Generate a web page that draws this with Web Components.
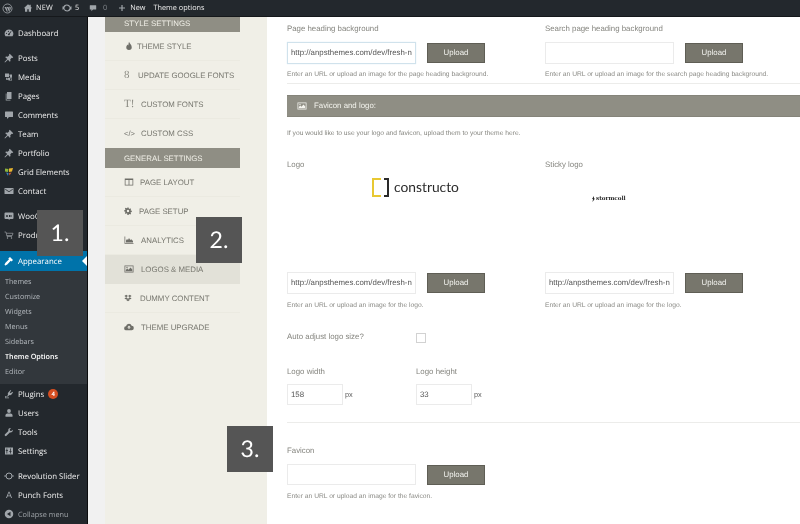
<!DOCTYPE html>
<html>
<head>
<meta charset="utf-8">
<title>Theme options</title>
<style>
  html, body { margin: 0; padding: 0; height: 524px; overflow: hidden; background: #fff; }
  body { font-family: "Liberation Sans", Arial, sans-serif; text-rendering: geometricPrecision; }
</style>
</head>
<body>
<theme-page>
  <wp-admin-bar slot="bar"></wp-admin-bar>

  <wp-menu slot="menu">
    <wp-menu-item icon="dashboard">Dashboard</wp-menu-item>
    <wp-menu-sep></wp-menu-sep>
    <wp-menu-item icon="pin">Posts</wp-menu-item>
    <wp-menu-item icon="media">Media</wp-menu-item>
    <wp-menu-item icon="pages">Pages</wp-menu-item>
    <wp-menu-item icon="comment">Comments</wp-menu-item>
    <wp-menu-item icon="pin">Team</wp-menu-item>
    <wp-menu-item icon="pin">Portfolio</wp-menu-item>
    <wp-menu-item icon="grid">Grid Elements</wp-menu-item>
    <wp-menu-item icon="mail">Contact</wp-menu-item>
    <wp-menu-sep></wp-menu-sep>
    <wp-menu-item icon="woo">WooCommerce</wp-menu-item>
    <wp-menu-item icon="cart">Products</wp-menu-item>
    <wp-menu-sep></wp-menu-sep>
    <wp-menu-item icon="brush" current>Appearance</wp-menu-item>
    <wp-submenu>
      <span>Themes</span>
      <span>Customize</span>
      <span>Widgets</span>
      <span>Menus</span>
      <span>Sidebars</span>
      <span class="on">Theme Options</span>
      <span>Editor</span>
    </wp-submenu>
    <wp-menu-item icon="plugin" badge="4">Plugins</wp-menu-item>
    <wp-menu-item icon="user">Users</wp-menu-item>
    <wp-menu-item icon="wrench">Tools</wp-menu-item>
    <wp-menu-item icon="settings">Settings</wp-menu-item>
    <wp-menu-sep></wp-menu-sep>
    <wp-menu-item icon="slider">Revolution Slider</wp-menu-item>
    <wp-menu-item glyph="A">Punch Fonts</wp-menu-item>
    <wp-menu-item icon="collapse" dim>Collapse menu</wp-menu-item>
  </wp-menu>

  <options-nav slot="nav">
    <nav-head first>Style settings</nav-head>
    <nav-item icon="drop" tx="14">Theme style</nav-item>
    <nav-item glyph="8" serif tx="15">Update Google fonts</nav-item>
    <nav-item glyph="T!" serif tx="18">Custom fonts</nav-item>
    <nav-item glyph="&lt;/&gt;" tx="18" last>Custom CSS</nav-item>
    <nav-head>General settings</nav-head>
    <nav-item icon="columns" tx="17">Page layout</nav-item>
    <nav-item icon="gear" isize="8" tx="16">Page setup</nav-item>
    <nav-item icon="chart" tx="18">Analytics</nav-item>
    <nav-item icon="image" tx="18" active>Logos &amp; media</nav-item>
    <nav-item icon="dropbox" isize="8" tx="17">Dummy content</nav-item>
    <nav-item icon="cloud" tx="18" last>Theme upgrade</nav-item>
  </options-nav>

  <options-content slot="content">
    <field-row>
      <upload-field label="Page heading background" value="http://anpsthemes.com/dev/fresh-ne" help="Enter an URL or upload an image for the page heading background." focused></upload-field>
      <upload-field label="Search page heading background" help="Enter an URL or upload an image for the search page heading background."></upload-field>
    </field-row>
    <rule-line style="--top:3px"></rule-line>
    <section-bar>Favicon and logo:</section-bar>
    <intro-text>If you would like to use your logo and favicon, upload them to your theme here.</intro-text>
    <field-row style="--row-top:19px;--help-top:5px">
      <upload-field label="Logo" value="http://anpsthemes.com/dev/fresh-ne" help="Enter an URL or upload an image for the logo.">
        <constructo-logo></constructo-logo>
      </upload-field>
      <upload-field label="Sticky logo" value="http://anpsthemes.com/dev/fresh-ne" help="Enter an URL or upload an image for the logo.">
        <stormcoll-logo></stormcoll-logo>
      </upload-field>
    </field-row>
    <check-field label="Auto adjust logo size?"></check-field>
    <size-row>
      <size-field label="Logo width" value="158"></size-field>
      <size-field label="Logo height" value="33"></size-field>
    </size-row>
    <rule-line style="--top:17px"></rule-line>
    <field-row style="--row-top:21px;--help-top:5px;--input-h:21px">
      <upload-field label="Favicon" help="Enter an URL or upload an image for the favicon."></upload-field>
    </field-row>
  </options-content>

  <step-badge slot="over" style="left:37px;top:210px">1.</step-badge>
  <step-badge slot="over" style="left:196px;top:217px">2.</step-badge>
  <step-badge slot="over" style="left:227px;top:426px">3.</step-badge>
</theme-page>

<script>
const ICONS = {
  wp: '<circle cx="10" cy="10" r="8.2" fill="none" stroke="currentColor" stroke-width="1.5"/><path d="M4.5 7.2h3.4l2.3 7.6-1 1.7zM8.6 7.2h3.4l2.2 7.6-1.1 1.7zM13 7c1.5-.4 3 .4 3 2.200 0 1.500-1 3-1.600 4.800z"/>',
  home: '<path d="M10 2.500 1.500 10.500H4v7h4.500v-5h3v5H16v-7h2.500L15.500 7.700V3.500h-2.500v1.500z"/>',
  update: '<path d="M10 3a7 7 0 0 1 6.600 4.700L19 6.500V13h-6l2.400-2.300A5.400 5.400 0 0 0 5 8.500L2.600 7.500A7.500 7.500 0 0 1 10 3zM1 7h6l-2.400 2.300A5.400 5.400 0 0 0 15 11.500l2.400 1A7.500 7.500 0 0 1 3.400 12.300L1 13.500z"/>',
  comment: '<path d="M3 3h14a1 1 0 0 1 1 1v9a1 1 0 0 1-1 1H10l-4 4v-4H3a1 1 0 0 1-1-1V4a1 1 0 0 1 1-1z"/>',
  plus: '<path d="M8.500 2.500h3v6h6v3h-6v6h-3v-6h-6v-3h6z"/>',
  dashboard: '<path fill-rule="evenodd" d="M10 3a8.500 8.500 0 0 0-7 13.500h14A8.500 8.500 0 0 0 10 3zM5 9.500a1.200 1.200 0 1 1 0 2.400 1.200 1.200 0 0 1 0-2.400zM8.800 5.500a1.200 1.200 0 1 1 0 2.400 1.200 1.200 0 0 1 0-2.400zM14 6l1 .700-3.600 5.300a1.800 1.800 0 1 1-1.600-1.100z"/>',
  pin: '<path d="M11.500 1.500 18.500 8.500 17 10l-1.500-.500-3 3 .5 3.500-1.500 1.500L8 13.500 2 19l-1-1 5.500-6L2.500 8.500 4 7l3.500.5 3-3L10 3z"/>',
  media: '<path d="M2 3h8v7H2zM4 11.500h1.500V13h2v-1.500H12V8h-1V5h5v12H9v-1.500H4z"/><path d="M13 11h2v3.500a1.500 1.500 0 1 1-1.500-1.500H13z" fill="#23282d"/>',
  pages: '<path d="M6 2h9v14H6z"/><path d="M3.500 5H5v12.500h8V19H3.500z"/>',
  grid: '<path fill="#8bb43c" d="M2 3l7 1-1 6-6-1z"/><path fill="#e8b52e" d="M10 3l8-1-2 7-6 1z"/><path fill="#3b86c4" d="M4 11l5 1-1 6z"/><path fill="#d25b3a" d="M10 12l5-1-4 6z"/>',
  mail: '<path d="M2 4h16a1 1 0 0 1 1 1v10a1 1 0 0 1-1 1H2a1 1 0 0 1-1-1V5a1 1 0 0 1 1-1z"/><path d="M2.500 6.500 10 11.500l7.500-5" fill="none" stroke="#23282d" stroke-width="1.600"/>',
  woo: '<path fill-rule="evenodd" d="M3 3h14a2 2 0 0 1 2 2v9a2 2 0 0 1-2 2h-6l1 2-4-2H3a2 2 0 0 1-2-2V5a2 2 0 0 1 2-2zM4 8v4h1l1-2 1 2h1V8H7v2L6 8.500 5 10V8zm6 0v4h2V8zm3 0v4h2V8z"/>',
  cart: '<path fill="none" stroke="currentColor" stroke-width="1.300" d="M1 4h3l2 9h10M4.600 6.500H18l-1.500 4.500H5.600"/><circle cx="7" cy="16" r="1.400"/><circle cx="15" cy="16" r="1.400"/>',
  brush: '<path d="M12 2l6 6-3 3-1.500-1.500L7 16.500c-1 1-4.500 2.500-4.500 2.500L1 17.500s1.500-3.500 2.500-4.500l6.500-6.500L8.500 5z"/>',
  plugin: '<path d="M13 2l1.500 1.500-3 3 2 2 3-3L18 7l-3 4c-1.300 1.500-3 1.700-4.500 1L8 15H3v2h7v1.500H2V14h4.500L8 11c-.700-1.500-.500-3 1-4.500z"/>',
  user: '<circle cx="10" cy="6" r="3.800"/><path d="M3 17.500v-3c0-2 2-3.500 3.500-3.500h7c1.500 0 3.500 1.500 3.500 3.500v3z"/>',
  wrench: '<path d="M17.500 5.500 14.500 8l-2.500-.5-.5-2.500 2.500-3c-2.500-.700-5.500 1-5.500 4 0 .700 0 1.300.3 1.800L2 14.500c-1 1-1 2 0 3s2 1 3 0l6.500-6.500c3.500 1 7-2 6-5.500z"/>',
  settings: '<path fill-rule="evenodd" d="M2 3h16v14H2zM5 5v3h-1.500v1.500H5V15h1.500V9.500H8V8H6.500V5zm7 0v5.500h-1.500V12H12v3h1.500v-3H15v-1.500h-1.500V5z"/>',
  slider: '<path fill="none" stroke="currentColor" stroke-width="2" d="M4 10a6 6 0 0 1 12 0 6 6 0 0 1-12 0"/><path d="M0 10l3-2.500v5zM20 10l-3-2.500v5z"/>',
  collapse: '<path fill-rule="evenodd" d="M10 1.500a8.500 8.500 0 1 0 0 17 8.500 8.500 0 0 0 0-17zM13 5.500v9L6 10z"/>',
  drop: '<path d="M10 1.500c1 3 5.500 6 5.500 11a5.500 5.500 0 0 1-11 0c0-2.500 1.500-3.500 2.500-5.500.5 1 1 1.500 1.500 2 .500-2.500.500-5 1.500-7.500z"/>',
  columns: '<path fill-rule="evenodd" d="M1.500 3h17v14h-17zM3 6v9.500h6.200V6zm7.800 0v9.500H17V6z"/>',
  gear: '<path fill-rule="evenodd" d="M8.500 1.500h3l.5 2.500 1.500.7 2.200-1.400 2.100 2.100-1.400 2.200.6 1.400 2.500.5v3l-2.500.5-.6 1.500 1.400 2.100-2.100 2.100-2.200-1.400-1.500.6-.5 2.600h-3L8 16.400l-1.500-.6-2.200 1.400-2.100-2.100 1.400-2.100-.6-1.500L.5 11V8l2.500-.5.6-1.400-1.400-2.200 2.100-2.100 2.200 1.400L8 3zM10 7a3 3 0 1 0 0 6 3 3 0 0 0 0-6z"/>',
  chart: '<path d="M1 3h1.500v13H19v1.500H1z"/><path d="M4 15v-4l2-3 2 2 2-4 2.500 4 2-1.500L18 12v3z"/>',
  image: '<path fill-rule="evenodd" d="M1 3h18v14H1zM2.500 4.500V15.500h15V4.500z"/><path d="M3.500 14.500V12l3-3 2.500 2.500 4-4.500 3.500 4v3.500z"/><circle cx="6" cy="7" r="1.300"/>',
  dropbox: '<path d="M5.500 2 10 5 5.500 8 1 5zM14.500 2 19 5 14.500 8 10 5zM1 11l4.500-3L10 11l-4.500 3zM14.500 8 19 11l-4.500 3L10 11zM5.500 15l4.500-3 4.500 3L10 18z"/>',
  cloud: '<path fill-rule="evenodd" d="M10 3.500a5.500 5.500 0 0 1 5.300 4 4.500 4.500 0 0 1-.3 9H4.500a4 4 0 0 1-.5-8A6 6 0 0 1 10 3.500zM10 7l-3.500 4H9v3h2v-3h2.500z"/>'
};
function svgIcon(name, size) {
  return `<svg width="${size}" height="${size}" viewBox="0 0 20 20" fill="currentColor">${ICONS[name] || ''}</svg>`;
}

class ThemePage extends HTMLElement {
  constructor() {
    super();
    this.attachShadow({ mode: 'open' });
    this.shadowRoot.innerHTML = `
      <style>
        :host { display: flex; flex-direction: column; position: relative; width: 800px; height: 524px; overflow: hidden; background: #fff; filter: blur(.3px); }
        .body { display: flex; flex: 1; min-height: 0; background: #f1f1f1; }
      </style>
      <slot name="bar"></slot>
      <div class="body">
        <slot name="menu"></slot>
        <slot name="nav"></slot>
        <slot name="content"></slot>
      </div>
      <slot name="over"></slot>`;
  }
}

class WpAdminBar extends HTMLElement {
  constructor() {
    super();
    this.attachShadow({ mode: 'open' });
    this.shadowRoot.innerHTML = `
      <style>
        :host { display: flex; align-items: center; height: 17px; background: #23282d; color: #eee; font: 7.3px/17px "Open Sans", sans-serif; padding-left: 2px; box-sizing: border-box; border-bottom: 1px solid #15181b; }
        svg { display: block; color: #a0a5aa; flex: none; }
        span { white-space: nowrap; }
        .dim { color: #82878c; }
        .g { display: flex; align-items: center; }
      </style>
      ${svgIcon('wp', 11)}
      <span class="g" style="margin-left:10px;gap:3px">${svgIcon('home', 10)}<span style="letter-spacing:.2px">NEW</span></span>
      <span class="g" style="margin-left:9px;gap:3px">${svgIcon('update', 10)}<span>5</span></span>
      <span class="g" style="margin-left:10px;gap:6px">${svgIcon('comment', 8)}<span class="dim">0</span></span>
      <span class="g" style="margin-left:11px;gap:4px">${svgIcon('plus', 8)}<span>New</span></span>
      <span style="margin-left:8px">Theme options</span>`;
  }
}

class WpMenu extends HTMLElement {
  constructor() {
    super();
    this.attachShadow({ mode: 'open' });
    this.shadowRoot.innerHTML = `
      <style>
        :host { display: block; flex: none; width: 88px; box-sizing: border-box; background: #23282d; border-right: 1px solid #0c0d0e; padding-top: 6px; font: 7.85px "Open Sans", sans-serif; color: #eee; }
      </style>
      <slot></slot>`;
  }
}

class WpMenuItem extends HTMLElement {
  constructor() {
    super();
    this.attachShadow({ mode: 'open' });
  }
  connectedCallback() {
    const icon = this.getAttribute('icon');
    const glyph = this.getAttribute('glyph');
    const badge = this.getAttribute('badge');
    this.shadowRoot.innerHTML = `
      <style>
        :host { display: flex; align-items: center; height: 19px; position: relative; padding-left: 4px; white-space: nowrap; }
        :host([current]) { background: #0073aa; color: #fff; height: 20px; margin-top: 1px; }
        :host([current])::after { content: ""; position: absolute; right: 0; top: 5px; border: 5px solid transparent; border-right-color: #fff; border-left-width: 0; }
        :host([dim]) { color: #a0a5aa; font-size: 7.3px; }
        .ic { width: 10px; height: 10px; margin-right: 4px; flex: none; color: #a0a5aa; display: flex; align-items: center; justify-content: center; font: 9px "Liberation Sans", sans-serif; }
        :host([current]) .ic { color: #fff; }
        svg { display: block; }
        .t { padding-top: 2px; }
        .badge { margin-left: 4px; width: 10px; height: 10px; border-radius: 50%; background: #d54e21; color: #fff; font-size: 6px; line-height: 10px; text-align: center; font-weight: bold; }
      </style>
      <span class="ic">${icon ? svgIcon(icon, 10) : (glyph || '')}</span>
      <span class="t"><slot></slot></span>
      ${badge ? `<span class="badge">${badge}</span>` : ''}`;
  }
}

class WpMenuSep extends HTMLElement {
  constructor() {
    super();
    this.attachShadow({ mode: 'open' });
    this.shadowRoot.innerHTML = `<style>:host { display: block; height: 6px; }</style>`;
  }
}

class WpSubmenu extends HTMLElement {
  constructor() {
    super();
    this.attachShadow({ mode: 'open' });
    this.shadowRoot.innerHTML = `
      <style>
        :host { display: flex; flex-direction: column; background: #32373c; padding: 3px 0 0 5px; height: 113px; box-sizing: border-box; color: #b4b9be; font-size: 7.2px; }
        ::slotted(span) { height: 15px; line-height: 17px; white-space: nowrap; }
        ::slotted(.on) { color: #fff; font-weight: 600; }
      </style>
      <slot></slot>`;
  }
}

class OptionsNav extends HTMLElement {
  constructor() {
    super();
    this.attachShadow({ mode: 'open' });
    this.shadowRoot.innerHTML = `
      <style>
        :host { display: block; flex: none; width: 162px; box-sizing: border-box; margin-left: 17px; background: #f0efe7; padding-right: 27px; font: 7.85px "Liberation Sans", sans-serif; }
      </style>
      <slot></slot>`;
  }
}

class NavHead extends HTMLElement {
  constructor() {
    super();
    this.attachShadow({ mode: 'open' });
    this.shadowRoot.innerHTML = `
      <style>
        :host { display: block; height: 20px; line-height: 22px; background: #8f8e84; color: #f0efe7; padding-left: 19px; text-transform: uppercase; }
        :host([first]) { height: 15px; line-height: 13px; }
      </style>
      <slot></slot>`;
  }
}

class NavItem extends HTMLElement {
  constructor() {
    super();
    this.attachShadow({ mode: 'open' });
  }
  connectedCallback() {
    const icon = this.getAttribute('icon');
    const glyph = this.getAttribute('glyph');
    const isize = this.getAttribute('isize') || 10;
    const tx = this.getAttribute('tx') || 14;
    this.shadowRoot.innerHTML = `
      <style>
        :host { display: flex; align-items: center; height: 29px; box-sizing: border-box; padding-left: 18px; color: #77776f; text-transform: uppercase; white-space: nowrap; border-bottom: 1px solid #ebeae1; }
        :host([last]) { border-bottom-color: transparent; }
        :host([active]) { background: #e2e1d8; border-bottom-color: transparent; }
        .ic { width: ${tx}px; flex: none; display: flex; color: #6e6e68; font-size: 7.5px; text-transform: none; padding-left: 1px; box-sizing: border-box; }
        :host([serif]) .ic { font: 11px "Liberation Serif", serif; color: #8a8a82; }
        svg { display: block; }
      </style>
      <span class="ic">${icon ? svgIcon(icon, isize) : (glyph || '').replace(/</g, '&lt;')}</span>
      <slot></slot>`;
  }
}

class OptionsContent extends HTMLElement {
  constructor() {
    super();
    this.attachShadow({ mode: 'open' });
    this.shadowRoot.innerHTML = `
      <style>
        :host { display: block; flex: 1; min-width: 0; padding-left: 20px; background: #fff; color: #85857f; font: 7.85px/14px "Liberation Sans", sans-serif; overflow: hidden; }
      </style>
      <slot></slot>`;
  }
}

class FieldRow extends HTMLElement {
  constructor() {
    super();
    this.attachShadow({ mode: 'open' });
    this.shadowRoot.innerHTML = `
      <style>
        :host { display: grid; grid-template-columns: 258px 258px; padding-top: var(--row-top, 5px); }
      </style>
      <slot></slot>`;
  }
}

class UploadField extends HTMLElement {
  constructor() {
    super();
    this.attachShadow({ mode: 'open' });
  }
  connectedCallback() {
    const value = this.getAttribute('value') || '';
    this.shadowRoot.innerHTML = `
      <style>
        :host { display: block; }
        .label { height: 12px; }
        .line { display: flex; align-items: center; margin-top: 8px; }
        .input { width: 129px; height: var(--input-h, 22px); box-sizing: border-box; border: 1px solid #ebebeb; background: #fff; color: #555; line-height: 20px; padding: 0 3px; }
        .input span { display: block; overflow: hidden; white-space: nowrap; }
        :host([focused]) .input { border-color: #d0e2ec; box-shadow: 0 0 1px #d5e6f0; }
        .btn { margin-left: 11px; width: 58px; height: 20px; box-sizing: border-box; border: 1px solid #5f5e55; background: #77766c; color: #f4f4f0; text-align: center; line-height: 18px; }
        .help { margin-top: var(--help-top, 4px); height: 12px; white-space: nowrap; font-size: 6.7px; color: #8a8a85; }
      </style>
      <div class="label">${this.getAttribute('label')}</div>
      <slot></slot>
      <div class="line">
        <div class="input"><span>${value}</span></div>
        <div class="btn">Upload</div>
      </div>
      <div class="help">${this.getAttribute('help')}</div>`;
  }
}

class RuleLine extends HTMLElement {
  constructor() {
    super();
    this.attachShadow({ mode: 'open' });
    this.shadowRoot.innerHTML = `<style>:host { display: block; height: 1px; margin-top: var(--top, 3px); background: #ececea; }</style>`;
  }
}

class SectionBar extends HTMLElement {
  constructor() {
    super();
    this.attachShadow({ mode: 'open' });
    this.shadowRoot.innerHTML = `
      <style>
        :host { display: flex; align-items: center; height: 22px; margin-top: 11px; box-sizing: border-box; background: #8f8e84; border-top: 1px solid #85847a; border-bottom: 1px solid #85847a; color: #f4f4ee; padding-left: 10px; gap: 7px; }
        svg { display: block; }
      </style>
      ${svgIcon('image', 10)}
      <slot></slot>`;
  }
}

class IntroText extends HTMLElement {
  constructor() {
    super();
    this.attachShadow({ mode: 'open' });
    this.shadowRoot.innerHTML = `
      <style>:host { display: block; margin-top: 10px; height: 12px; font-size: 6.7px; white-space: nowrap; }</style>
      <slot></slot>`;
  }
}

class ConstructoLogo extends HTMLElement {
  constructor() {
    super();
    this.attachShadow({ mode: 'open' });
    this.shadowRoot.innerHTML = `
      <style>
        :host { display: block; height: 94px; box-sizing: border-box; padding: 8px 0 0 85px; }
        .row { display: flex; align-items: center; gap: 5px; height: 19px; color: #2a2a2a; font: 13.8px/19px "Lato", sans-serif; }
        .row span { margin-top: -3px; }
        svg { display: block; flex: none; }
      </style>
      <div class="row">
        <svg width="17" height="19" viewBox="0 0 17 19" fill="none" stroke-width="2">
          <path d="M9 1H1v17h8" stroke="#e8c832"/>
          <path d="M12 1h4v17h-4" stroke="#2a2a2a"/>
        </svg>
        <span>constructo</span>
      </div>`;
  }
}

class StormcollLogo extends HTMLElement {
  constructor() {
    super();
    this.attachShadow({ mode: 'open' });
    this.shadowRoot.innerHTML = `
      <style>
        :host { display: block; height: 94px; box-sizing: border-box; padding: 25px 0 0 47px; }
        .row { display: flex; align-items: center; gap: 1px; height: 8px; color: #2a2a2a; font: bold 5.6px/8px "DejaVu Serif", serif; }
        svg { display: block; }
      </style>
      <div class="row">
        <svg width="3" height="6" viewBox="0 0 3 6" fill="#2a2a2a"><path d="M2 0 0 3h1L.5 6 3 2.500H2z"/></svg>
        <span>stormcoll</span>
      </div>`;
  }
}

class CheckField extends HTMLElement {
  constructor() {
    super();
    this.attachShadow({ mode: 'open' });
    this.shadowRoot.innerHTML = `
      <style>
        :host { display: flex; height: 12px; margin-top: 19px; }
        .l { width: 129px; white-space: nowrap; }
        .box { width: 8px; height: 8px; margin-top: 3px; border: 1px solid #d2d2d2; box-sizing: content-box; }
      </style>
      <div class="l">${this.getAttribute('label')}</div><div class="box"></div>`;
  }
}

class SizeRow extends HTMLElement {
  constructor() {
    super();
    this.attachShadow({ mode: 'open' });
    this.shadowRoot.innerHTML = `
      <style>:host { display: grid; grid-template-columns: 129px 129px; margin-top: 23px; }</style>
      <slot></slot>`;
  }
}

class SizeField extends HTMLElement {
  constructor() {
    super();
    this.attachShadow({ mode: 'open' });
    this.shadowRoot.innerHTML = `
      <style>
        :host { display: block; }
        .label { height: 12px; }
        .line { display: flex; align-items: center; margin-top: 7px; }
        .input { width: 56px; height: 21px; box-sizing: border-box; border: 1px solid #ebebeb; padding-left: 3px; line-height: 19px; color: #555; }
        .px { margin-left: 2px; color: #666; font-size: 7.4px; }
      </style>
      <div class="label">${this.getAttribute('label')}</div>
      <div class="line"><div class="input">${this.getAttribute('value')}</div><span class="px">px</span></div>`;
  }
}

class StepBadge extends HTMLElement {
  constructor() {
    super();
    this.attachShadow({ mode: 'open' });
    this.shadowRoot.innerHTML = `
      <style>
        :host { position: absolute; width: 46px; height: 46px; box-sizing: border-box; padding-bottom: 2px; display: flex; align-items: center; justify-content: center; background: #555; color: #fff; font: 23px "Lato", sans-serif; }
      </style>
      <slot></slot>`;
  }
}

customElements.define('theme-page', ThemePage);
customElements.define('wp-admin-bar', WpAdminBar);
customElements.define('wp-menu', WpMenu);
customElements.define('wp-menu-item', WpMenuItem);
customElements.define('wp-menu-sep', WpMenuSep);
customElements.define('wp-submenu', WpSubmenu);
customElements.define('options-nav', OptionsNav);
customElements.define('nav-head', NavHead);
customElements.define('nav-item', NavItem);
customElements.define('options-content', OptionsContent);
customElements.define('field-row', FieldRow);
customElements.define('upload-field', UploadField);
customElements.define('rule-line', RuleLine);
customElements.define('section-bar', SectionBar);
customElements.define('intro-text', IntroText);
customElements.define('constructo-logo', ConstructoLogo);
customElements.define('stormcoll-logo', StormcollLogo);
customElements.define('check-field', CheckField);
customElements.define('size-row', SizeRow);
customElements.define('size-field', SizeField);
customElements.define('step-badge', StepBadge);
</script>
</body>
</html>
